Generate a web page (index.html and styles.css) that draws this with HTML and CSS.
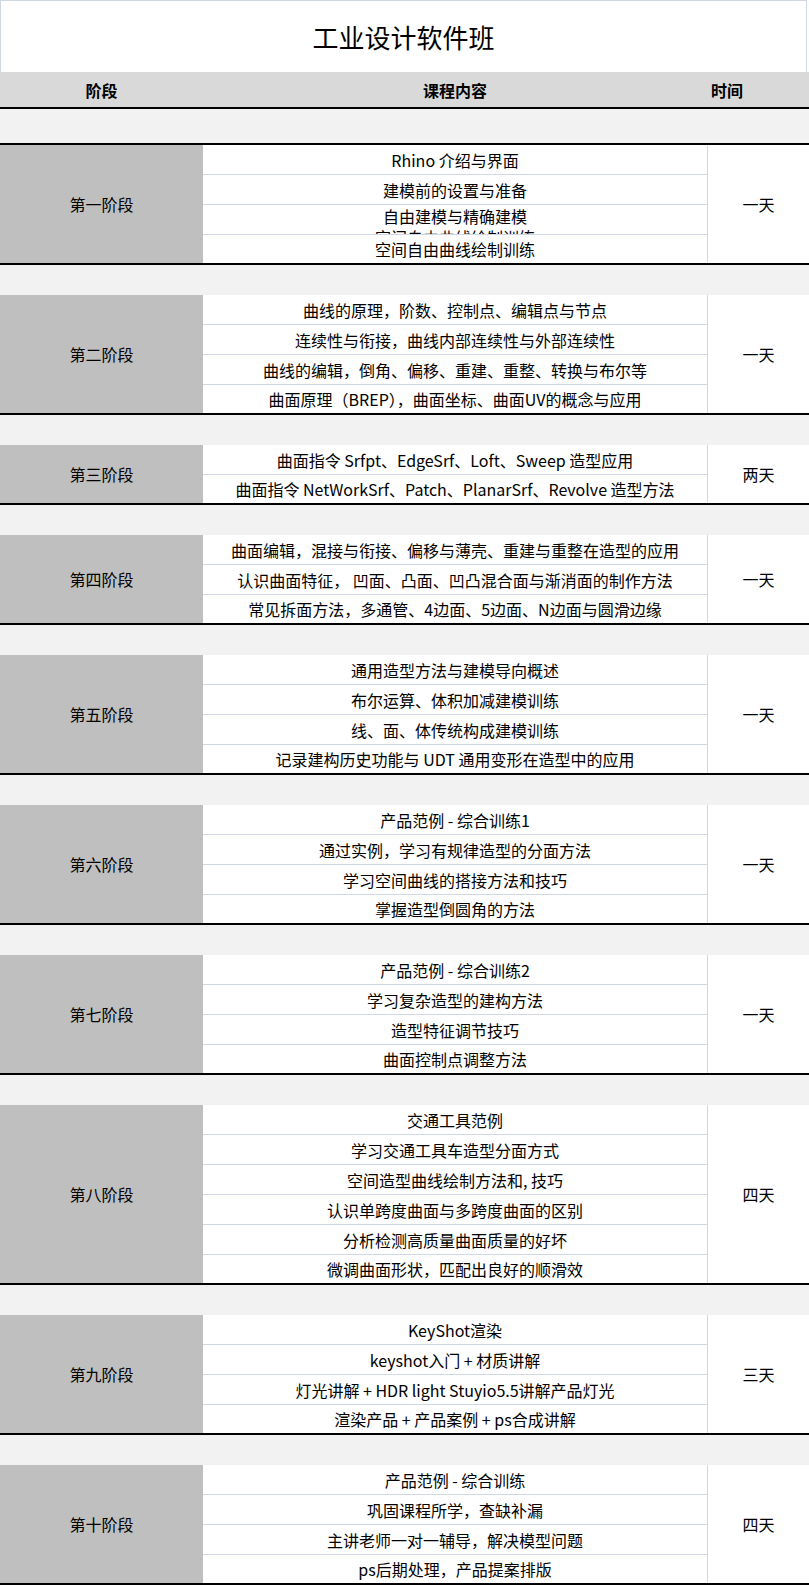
FILE: index.html
```html
<!DOCTYPE html>
<html lang="zh-CN">
<head>
<meta charset="utf-8">
<title>工业设计软件班</title>
<link rel="stylesheet" href="styles.css">
</head>
<body>
<div class="sheet">
  <div class="title">工业设计软件班</div>
  <div class="head">
    <div class="h-stage">阶段</div>
    <div class="h-content">课程内容</div>
    <div class="h-time">时间</div>
  </div>
  <div class="spacer first"></div>

  <div class="section">
    <div class="stage">第一阶段</div>
    <div class="items">
      <div class="item">Rhino 介绍与界面</div>
      <div class="item">建模前的设置与准备</div>
      <div class="item wrap"><span class="line1">自由建模与精确建模</span><span class="line2">空间自由曲线绘制训练</span></div>
      <div class="item">空间自由曲线绘制训练</div>
    </div>
    <div class="time">一天</div>
  </div>
  <div class="spacer"></div>

  <div class="section">
    <div class="stage">第二阶段</div>
    <div class="items">
      <div class="item">曲线的原理，阶数、控制点、编辑点与节点</div>
      <div class="item">连续性与衔接，曲线内部连续性与外部连续性</div>
      <div class="item">曲线的编辑，倒角、偏移、重建、重整、转换与布尔等</div>
      <div class="item">曲面原理（BREP），曲面坐标、曲面UV的概念与应用</div>
    </div>
    <div class="time">一天</div>
  </div>
  <div class="spacer"></div>

  <div class="section">
    <div class="stage">第三阶段</div>
    <div class="items">
      <div class="item">曲面指令 Srfpt、EdgeSrf、Loft、Sweep 造型应用</div>
      <div class="item">曲面指令 NetWorkSrf、Patch、PlanarSrf、Revolve 造型方法</div>
    </div>
    <div class="time">两天</div>
  </div>
  <div class="spacer"></div>

  <div class="section">
    <div class="stage">第四阶段</div>
    <div class="items">
      <div class="item">曲面编辑，混接与衔接、偏移与薄壳、重建与重整在造型的应用</div>
      <div class="item">认识曲面特征， 凹面、凸面、凹凸混合面与渐消面的制作方法</div>
      <div class="item">常见拆面方法，多通管、4边面、5边面、N边面与圆滑边缘</div>
    </div>
    <div class="time">一天</div>
  </div>
  <div class="spacer"></div>

  <div class="section">
    <div class="stage">第五阶段</div>
    <div class="items">
      <div class="item">通用造型方法与建模导向概述</div>
      <div class="item">布尔运算、体积加减建模训练</div>
      <div class="item">线、面、体传统构成建模训练</div>
      <div class="item">记录建构历史功能与 UDT 通用变形在造型中的应用</div>
    </div>
    <div class="time">一天</div>
  </div>
  <div class="spacer"></div>

  <div class="section">
    <div class="stage">第六阶段</div>
    <div class="items">
      <div class="item">产品范例 - 综合训练1</div>
      <div class="item">通过实例，学习有规律造型的分面方法</div>
      <div class="item">学习空间曲线的搭接方法和技巧</div>
      <div class="item">掌握造型倒圆角的方法</div>
    </div>
    <div class="time">一天</div>
  </div>
  <div class="spacer"></div>

  <div class="section">
    <div class="stage">第七阶段</div>
    <div class="items">
      <div class="item">产品范例 - 综合训练2</div>
      <div class="item">学习复杂造型的建构方法</div>
      <div class="item">造型特征调节技巧</div>
      <div class="item">曲面控制点调整方法</div>
    </div>
    <div class="time">一天</div>
  </div>
  <div class="spacer"></div>

  <div class="section">
    <div class="stage">第八阶段</div>
    <div class="items">
      <div class="item">交通工具范例</div>
      <div class="item">学习交通工具车造型分面方式</div>
      <div class="item">空间造型曲线绘制方法和, 技巧</div>
      <div class="item">认识单跨度曲面与多跨度曲面的区别</div>
      <div class="item">分析检测高质量曲面质量的好坏</div>
      <div class="item">微调曲面形状，匹配出良好的顺滑效</div>
    </div>
    <div class="time">四天</div>
  </div>
  <div class="spacer"></div>

  <div class="section">
    <div class="stage">第九阶段</div>
    <div class="items">
      <div class="item">KeyShot渲染</div>
      <div class="item">keyshot入门 + 材质讲解</div>
      <div class="item">灯光讲解 + HDR light Stuyio5.5讲解产品灯光</div>
      <div class="item">渲染产品 + 产品案例 + ps合成讲解</div>
    </div>
    <div class="time">三天</div>
  </div>
  <div class="spacer"></div>

  <div class="section">
    <div class="stage">第十阶段</div>
    <div class="items">
      <div class="item">产品范例 - 综合训练</div>
      <div class="item">巩固课程所学，查缺补漏</div>
      <div class="item">主讲老师一对一辅导，解决模型问题</div>
      <div class="item">ps后期处理，产品提案排版</div>
    </div>
    <div class="time">四天</div>
  </div>
</div>
</body>
</html>
```

FILE: styles.css
```css
* {
  box-sizing: border-box;
}

html, body {
  margin: 0;
  padding: 0;
  background: #ffffff;
}

body {
  font-family: "Noto Sans CJK SC", "Microsoft YaHei", "Noto Sans", sans-serif;
  font-size: 16px;
  color: #000000;
}

.sheet {
  width: 809px;
}

.title {
  width: 807px;
  height: 72px;
  border-top: 1px solid #d0d7e5;
  border-left: 1px solid #d0d7e5;
  border-right: 1px solid #d0d7e5;
  display: flex;
  align-items: center;
  justify-content: center;
  font-size: 26px;
  line-height: 1;
}

.head {
  height: 37px;
  background: #d9d9d9;
  border-bottom: 2px solid #000000;
  display: grid;
  grid-template-columns: 203px 504px 102px;
  font-weight: 700;
  line-height: 1;
}

.head > div {
  display: flex;
  align-items: center;
  justify-content: center;
}

.head .h-time {
  justify-content: flex-start;
  padding-left: 4px;
}

.spacer {
  height: 30px;
  background: #f2f2f2;
}

.spacer.first {
  height: 36px;
  border-bottom: 2px solid #000000;
}

.section {
  display: grid;
  grid-template-columns: 203px 504px 102px;
  border-bottom: 2px solid #000000;
  background: #ffffff;
}

.stage {
  background: #bfbfbf;
  display: flex;
  align-items: center;
  justify-content: center;
}

.items {
  display: flex;
  flex-direction: column;
}

.item {
  height: 30px;
  border-bottom: 1px solid #d0d7e5;
  display: flex;
  align-items: center;
  justify-content: center;
  white-space: nowrap;
  line-height: 20px;
}

.item:last-child {
  height: 28px;
  border-bottom: none;
}

.item.wrap {
  flex-direction: column;
  justify-content: flex-start;
  align-items: center;
  overflow: hidden;
  padding-top: 1px;
}

.item.wrap .line1 {
  display: block;
  height: 21px;
  line-height: 20px;
}

.item.wrap .line2 {
  display: block;
  height: 7px;
  line-height: 20px;
  overflow: hidden;
}

.time {
  border-left: 1px solid #d0d7e5;
  display: flex;
  align-items: center;
  justify-content: center;
}
```
